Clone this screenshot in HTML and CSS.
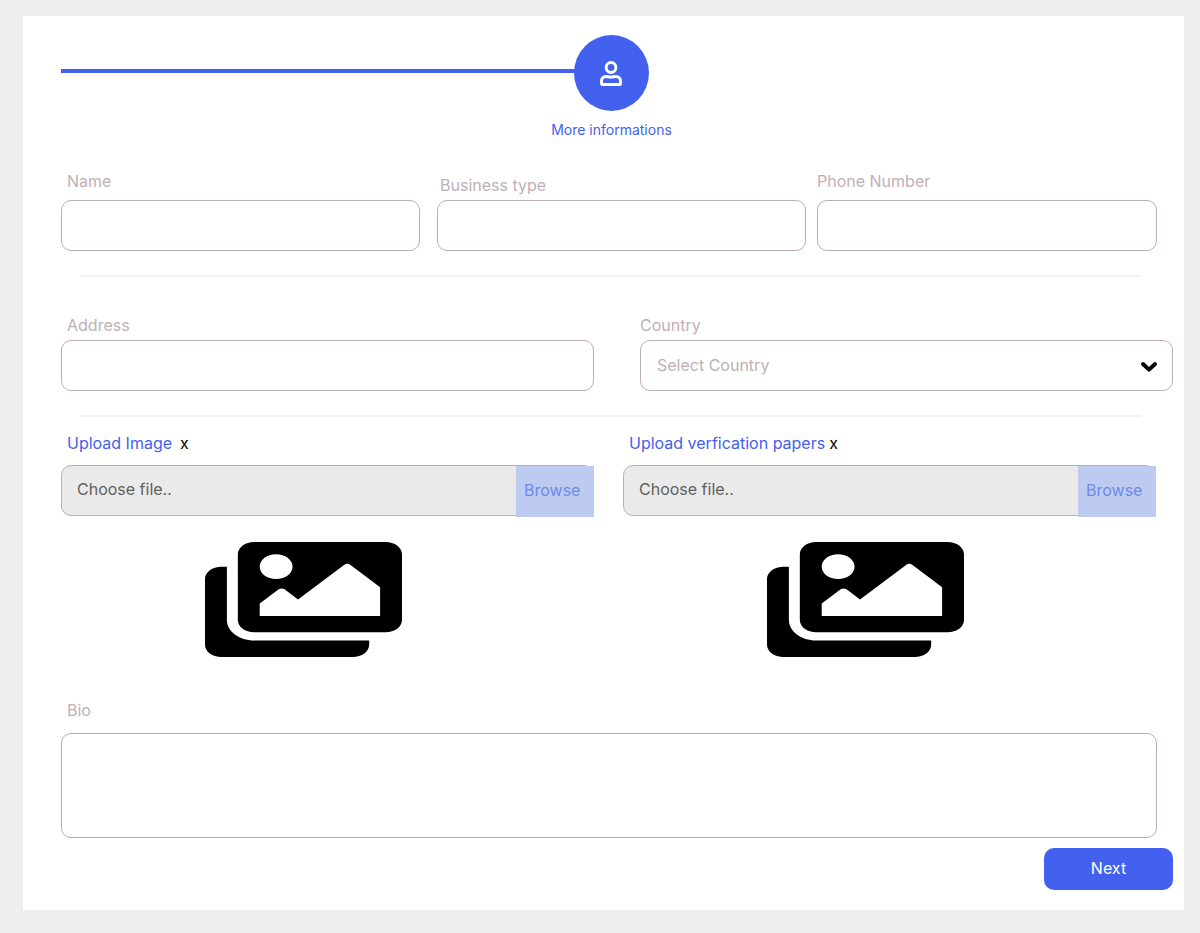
FILE: index.html
```html
<!DOCTYPE html>
<html lang="en">
<head>
<meta charset="utf-8">
<meta name="viewport" content="width=device-width, initial-scale=1">
<title>More informations</title>
<link rel="stylesheet" href="styles.css">
</head>
<body>
<svg class="sprite" aria-hidden="true">
  <symbol id="images" viewBox="0 32 576 448" preserveAspectRatio="none">
    <path d="M480 416v16c0 26.51-21.49 48-48 48H48c-26.51 0-48-21.49-48-48V176c0-26.51 21.49-48 48-48h16v208c0 44.112 35.888 80 80 80h336zm96-80V80c0-26.51-21.49-48-48-48H144c-26.51 0-48 21.49-48 48v256c0 26.51 21.49 48 48 48h384c26.51 0 48-21.49 48-48zM256 128c0 26.51-21.49 48-48 48s-48-21.49-48-48 21.49-48 48-48 48 21.49 48 48zm-96 144l55.515-55.515c4.686-4.686 12.284-4.686 16.971 0L272 256l135.515-135.515c4.686-4.686 12.284-4.686 16.971 0L512 208v112H160v-48z"/>
  </symbol>
</svg>
<form class="card">
  <div class="step">
    <div class="step-line"></div>
    <div class="step-circle">
      <svg class="step-icon" viewBox="0 0 22 25" aria-hidden="true">
        <circle cx="11" cy="6.5" r="4.9"/>
        <path d="M6.2 15.4C3.4 15.4 1.5 17.6 1.5 20.2V22.2Q1.5 23.5 2.8 23.5H19.2Q20.5 23.5 20.5 22.2V20.2C20.5 17.6 18.6 15.4 15.8 15.4C14.2 15.4 13.5 16.1 11 16.1S7.8 15.4 6.2 15.4Z"/>
      </svg>
    </div>
    <div class="step-label">More informations</div>
  </div>

  <div class="row row-basic">
    <div class="field field-name">
      <label class="label" for="name">Name</label>
      <input class="control" id="name" type="text">
    </div>
    <div class="field field-business">
      <label class="label label-close" for="business">Business type</label>
      <input class="control" id="business" type="text">
    </div>
    <div class="field field-phone">
      <label class="label" for="phone">Phone Number</label>
      <input class="control" id="phone" type="tel">
    </div>
  </div>

  <hr class="divider">

  <div class="row row-place">
    <div class="field">
      <label class="label" for="address">Address</label>
      <input class="control" id="address" type="text">
    </div>
    <div class="field">
      <label class="label label-flush" for="country">Country</label>
      <div class="select-wrap">
        <select class="control select" id="country"><option>Select Country</option></select>
        <svg class="chevron" viewBox="0 0 16 10" aria-hidden="true"><path d="M2 2L8 7.6L14 2"/></svg>
      </div>
    </div>
  </div>

  <hr class="divider">

  <div class="row row-upload">
    <div class="upload">
      <div class="upload-head upload-head-wide">
        <label class="upload-label" for="image">Upload Image</label>
        <button class="clear" type="button" aria-label="Clear image">x</button>
      </div>
      <label class="file">
        <input class="file-input" id="image" type="file">
        <span class="file-text">Choose file..</span>
        <span class="browse">Browse</span>
      </label>
      <svg class="preview" aria-hidden="true"><use href="#images"/></svg>
    </div>
    <div class="upload">
      <div class="upload-head">
        <label class="upload-label" for="papers">Upload verfication papers</label>
        <button class="clear" type="button" aria-label="Clear papers">x</button>
      </div>
      <label class="file">
        <input class="file-input" id="papers" type="file">
        <span class="file-text">Choose file..</span>
        <span class="browse">Browse</span>
      </label>
      <svg class="preview" aria-hidden="true"><use href="#images"/></svg>
    </div>
  </div>

  <div class="field field-bio">
    <label class="label" for="bio">Bio</label>
    <textarea class="control bio" id="bio"></textarea>
  </div>

  <button class="next" type="submit">Next</button>
</form>
</body>
</html>
```
FILE: styles.css
```css
* {
  box-sizing: border-box;
}

body {
  margin: 0;
  padding: 16px 16px 23px 23px;
  background: #edeef0;
  font-family: Inter, "Liberation Sans", sans-serif;
  font-size: 16px;
  font-weight: 400;
  line-height: 20px;
}

input,
select,
textarea,
button {
  font: inherit;
}

.sprite {
  display: none;
}

.card {
  display: flex;
  flex-direction: column;
  padding: 19px 11px 20px 38px;
  background: #fff;
}

.step {
  display: grid;
  grid-template-columns: 513fr 75px 508fr;
  margin-right: 16px;
  color: #4361ee;
}

.step-line {
  height: 4px;
  margin: 34px -2px 0 0;
  background: #4361ee;
}

.step-circle {
  display: flex;
  align-items: center;
  justify-content: center;
  height: 76px;
  padding-right: 1px;
  border-radius: 50%;
  background: #4361ee;
}

.step-icon {
  width: 22px;
  height: 25px;
  fill: none;
  stroke: #fff;
  stroke-width: 3;
}

.step-label {
  grid-column: 2;
  justify-self: center;
  margin-top: 9px;
  font-size: 14px;
  white-space: nowrap;
}

.row {
  display: flex;
}

.row-basic {
  align-items: flex-end;
  margin: 31px 16px 24px 0;
}

.row-place {
  gap: 46px;
  margin: 38px 0 24px;
}

.row-upload {
  gap: 29px;
  margin: 16px 17px 0 0;
}

.field {
  display: flex;
  flex: 1 1 0;
  flex-direction: column;
  min-width: 0;
}

.field-name {
  flex-grow: 359;
  margin-right: 17px;
}

.field-business {
  flex-grow: 369;
  margin-right: 11px;
}

.field-phone {
  flex-grow: 340;
}

.label {
  margin: 0 0 9px 6px;
  color: #bfb0b6;
}

.label-close {
  margin: 0 0 5px 3px;
}

.row-place .label {
  margin-bottom: 5px;
}

.field-phone .label,
.row-place .label-flush {
  margin-left: 0;
}

.control {
  display: block;
  width: 100%;
  height: 51px;
  margin: 0;
  padding: 0 16px;
  border: 1px solid #bfadb4;
  border-radius: 10px;
  background: #fff;
}

.select-wrap {
  position: relative;
}

.select {
  appearance: none;
  padding-bottom: 2px;
  color: #bfb0b6;
}

.chevron {
  position: absolute;
  top: 22px;
  right: 16px;
  width: 16px;
  height: 10px;
  overflow: visible;
  fill: none;
  stroke: #000;
  stroke-width: 4;
  stroke-linecap: round;
  stroke-linejoin: round;
  pointer-events: none;
}

.divider {
  width: auto;
  height: 2px;
  margin: 0 32px 0 20px;
  border: 0;
  background: #f3f3f3;
}

.upload {
  display: flex;
  flex: 1 1 0;
  flex-direction: column;
  min-width: 0;
}

.upload-head {
  display: flex;
  gap: 4px;
  margin: 0 0 12px 6px;
}

.upload-head-wide {
  gap: 8px;
}

.upload-label {
  color: #4361ee;
}

.clear {
  padding: 0;
  border: 0;
  background: none;
  color: #000;
}

.file {
  position: relative;
  display: flex;
  align-items: center;
  height: 51px;
  padding: 0 15px 3px;
  border: 1px solid #bfadb4;
  border-radius: 10px;
  background: #eaeaea;
  color: #606060;
}

.file-input {
  position: absolute;
  width: 1px;
  height: 1px;
  opacity: 0;
}

.browse {
  position: absolute;
  top: 0;
  right: -1px;
  width: 78px;
  padding: 14px 8px 17px;
  background: #bdcbf0;
  color: #6f87ee;
}

.preview {
  align-self: center;
  width: 197px;
  height: 115px;
  margin: 26px 48px 0 0;
}

.field-bio {
  flex: none;
  margin: 43px 16px 10px 0;
}

.field-bio .label {
  margin-bottom: 13px;
}

.bio {
  height: 105px;
  padding: 12px 16px;
  resize: none;
}

.next {
  align-self: flex-end;
  width: 129px;
  height: 42px;
  padding: 0 0 2px;
  border: 0;
  border-radius: 10px;
  background: #4361ee;
  color: #fff;
}
```
